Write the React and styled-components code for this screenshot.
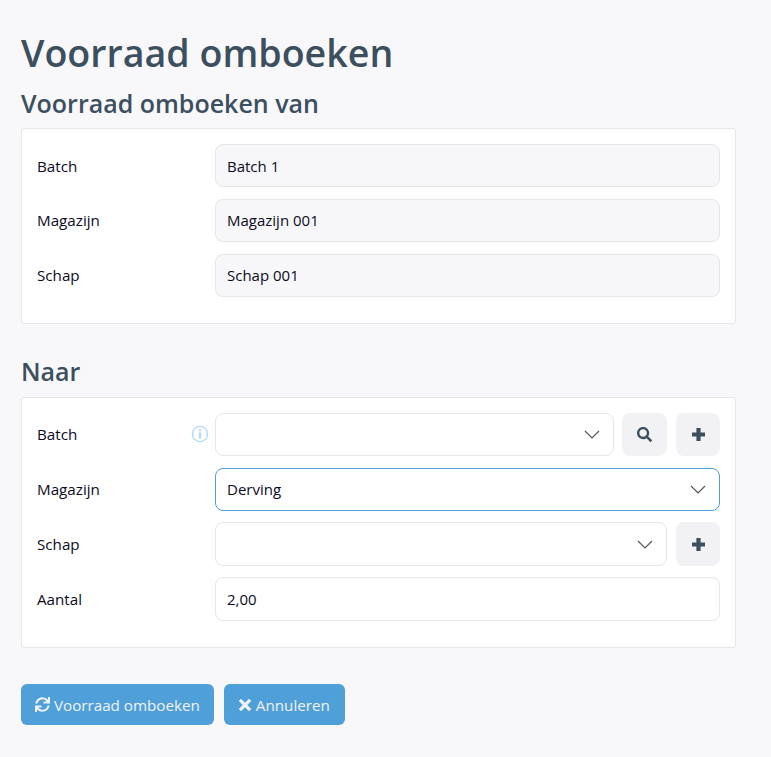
import styled, { createGlobalStyle } from "styled-components";
import { FaSearch, FaSync } from "react-icons/fa";

const GlobalStyle = createGlobalStyle`
html, body {
  margin: 0;
  background-color: #f8f8fb;
  font-family: "Open Sans", "Noto Sans", sans-serif;
}
* { box-sizing: border-box; }`;

function Chevron() {
  return (
    <ChevronIcon viewBox="0 0 16 9" fill="none" stroke="#555" strokeWidth="1.2">
      <path d="M1 1l7 7 7-7" />
    </ChevronIcon>
  );
}

function InfoIcon() {
  return (
    <InfoSvg viewBox="0 0 18 18">
      <circle cx="9" cy="9" r="7.6" fill="none" stroke="#b3daf5" strokeWidth="1.4" />
      <rect x="7.9" y="7.4" width="2.2" height="6" fill="#b3daf5" />
      <rect x="7.9" y="4.2" width="2.2" height="2" fill="#b3daf5" />
    </InfoSvg>
  );
}

function PlusIcon() {
  return (
    <svg width="15" height="15" viewBox="0 0 15 15" fill="currentColor">
      <path d="M5.4 1h4.2v4.4H14v4.2H9.6V14H5.4V9.6H1V5.4h4.4z" />
    </svg>
  );
}

function CrossIcon() {
  return (
    <svg width="14" height="14" viewBox="0 0 14 14" fill="currentColor">
      <path d="M3 .8 7 4.7l4-3.9L13.2 3 9.3 7l3.9 4-2.2 2.2-4-3.9-4 3.9L.8 11l3.9-4L.8 3z" />
    </svg>
  );
}

function Row({ label, info, children }) {
  return (
    <FormRow>
      <Label>
        {label}
        {info && <InfoIcon />}
      </Label>
      <Controls>{children}</Controls>
    </FormRow>
  );
}

export default function App() {
  return (
    <Page>
      <GlobalStyle />
      <Title>Voorraad omboeken</Title>
      <Subtitle>Voorraad omboeken van</Subtitle>
      <Panel>
        <Row label="Batch"><ReadOnly>Batch 1</ReadOnly></Row>
        <Row label="Magazijn"><ReadOnly>Magazijn 001</ReadOnly></Row>
        <Row label="Schap"><ReadOnly>Schap 001</ReadOnly></Row>
      </Panel>
      <SecondSubtitle>Naar</SecondSubtitle>
      <Panel>
        <Row label="Batch" info>
          <Select><Chevron /></Select>
          <SearchButton><FaSearch size={15} /></SearchButton>
          <IconButton><PlusIcon /></IconButton>
        </Row>
        <Row label="Magazijn">
          <Select $focused>Derving<Chevron /></Select>
        </Row>
        <Row label="Schap">
          <Select><Chevron /></Select>
          <IconButton><PlusIcon /></IconButton>
        </Row>
        <Row label="Aantal"><Input>2,00</Input></Row>
      </Panel>
      <Actions>
        <ActionButton><FaSync size={15} />Voorraad omboeken</ActionButton>
        <ActionButton><CrossIcon />Annuleren</ActionButton>
      </Actions>
    </Page>
  );
}

const Page = styled.main`
width: 771px;
min-height: 757px;
padding: 24px 35px 32px 21px;
background-color: #f8f8fb;
display: flex;
flex-direction: column;`

const Title = styled.h1`
margin: 0;
color: #3c4f5f;
font-size: 37.6px;
font-weight: 600;
line-height: 58px;`

const Subtitle = styled.h2`
margin: 5px 0 8px 0;
color: #3c4f5f;
font-size: 25px;
font-weight: 600;
line-height: 33px;`

const SecondSubtitle = styled(Subtitle)`
margin-top: 30.6px;
margin-bottom: 9px;`

const Panel = styled.section`
background-color: #ffffff;
border: 1px solid #e6e6e9;
border-radius: 3px;
padding: 15px 15px 26.2px 15px;
display: flex;
flex-direction: column;
gap: 11.5px;`

const FormRow = styled.div`
display: flex;
align-items: center;`

const Label = styled.label`
width: 178px;
padding-right: 6px;
color: #0b0b1e;
font-size: 15.2px;
display: flex;
align-items: center;
justify-content: space-between;`

const InfoSvg = styled.svg`
width: 18px;
height: 18px;`

const Controls = styled.div`
flex: 1;
display: flex;
gap: 9px;`

const Field = styled.div`
flex: 1;
height: 43.33px;
padding: 0 11px;
border: 1px solid #e6e6e9;
border-radius: 8px;
color: #0b0b1e;
font-size: 15px;
display: flex;
align-items: center;`

const ReadOnly = styled(Field)`
background-color: #f7f7f9;`

const Input = styled(Field)`
background-color: #ffffff;`

const Select = styled(Field)`
justify-content: space-between;
padding-right: 13px;
border-color: ${(props) => (props.$focused ? "#4f9fd9" : "#e6e6e9")};`

const ChevronIcon = styled.svg`
width: 16px;
height: 9px;
margin-left: auto;`

const IconButton = styled.button`
width: 44px;
height: 43.33px;
border: none;
border-radius: 8px;
padding: 0;
background-color: #f2f2f5;
color: #3c4f5f;
display: flex;
align-items: center;
justify-content: center;`

const SearchButton = styled(IconButton)`
width: 45px;
margin-left: -1px;`

const Actions = styled.div`
margin-top: 36.2px;
display: flex;
gap: 10px;`

const ActionButton = styled.button`
height: 41px;
padding: 1px 14px 0 14px;
border: none;
border-radius: 6px;
background-color: #4f9fd9;
color: #f2f2f5;
font-family: inherit;
font-size: 15.2px;
display: flex;
align-items: center;
gap: 4px;

&:last-child {
  padding-right: 15px;
}`
